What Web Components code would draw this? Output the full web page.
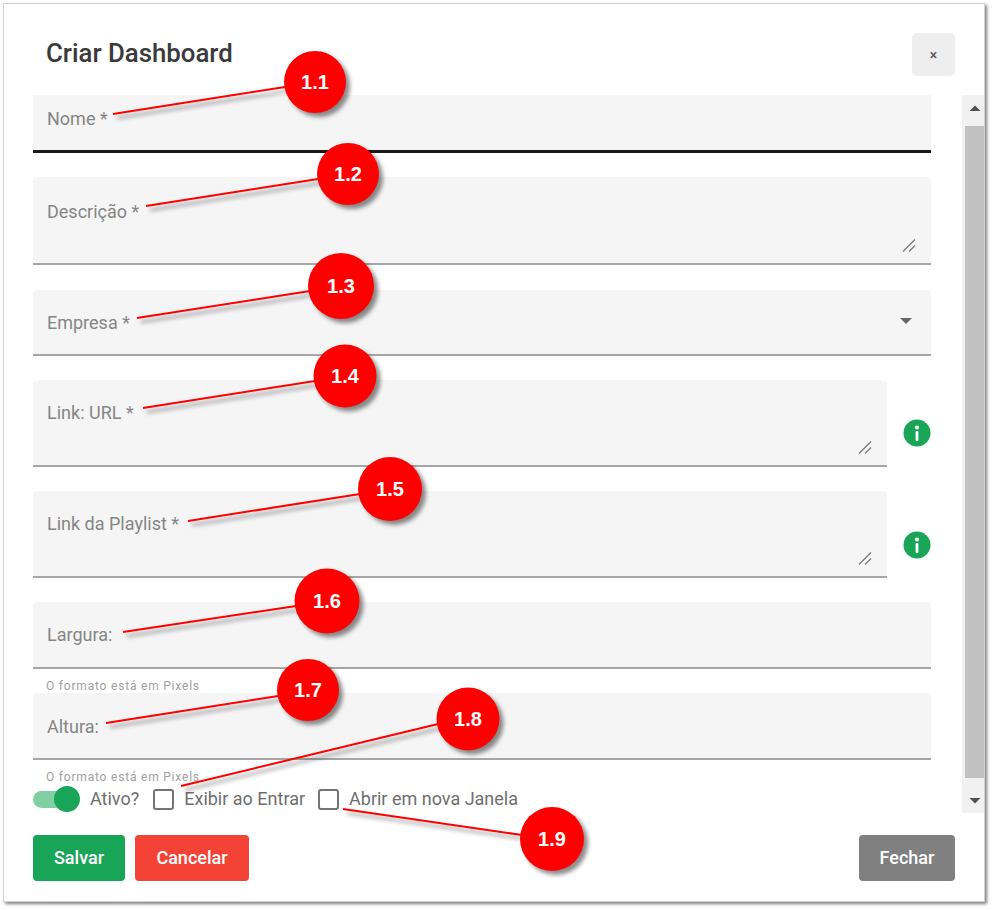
<!DOCTYPE html>
<html lang="pt-BR">
<head>
<meta charset="utf-8">
<title>Criar Dashboard</title>
<style>
  html, body { margin: 0; background: #fff; font-family: Roboto, "Liberation Sans", sans-serif; }
  body { width: 994px; height: 910px; overflow: hidden; position: relative; }
</style>
</head>
<body>
<dash-dialog heading="Criar Dashboard">
  <text-field label="Nome *" focused style="--label-top:25px;--field-h:67px;margin-bottom:24px"></text-field>
  <text-field label="Descrição *" multiline style="--label-top:27px;--field-h:88px;margin-bottom:25px"></text-field>
  <text-field label="Empresa *" select style="--field-h:66px;margin-bottom:24px"></text-field>
  <info-row style="margin-bottom:24px;--shift:19px">
    <text-field label="Link: URL *" multiline style="--field-h:87px"></text-field>
  </info-row>
  <info-row style="margin-bottom:24px;--shift:21px">
    <text-field label="Link da Playlist *" multiline style="--field-h:87px"></text-field>
  </info-row>
  <text-field label="Largura:" hint="O formato está em Pixels" style="--field-h:67px"></text-field>
  <text-field label="Altura:" hint="O formato está em Pixels" style="--label-top:26px;--field-h:67px"></text-field>
  <option-row>
    <toggle-switch style="margin-right:14px">Ativo?</toggle-switch>
    <check-box>Exibir ao Entrar</check-box>
    <check-box>Abrir em nova Janela</check-box>
  </option-row>
  <action-button slot="footer" color="#18a558" style="width:92px">Salvar</action-button>
  <action-button slot="footer" color="#f44336" style="width:114px">Cancelar</action-button>
  <action-button slot="footer" color="#808080" style="width:96px;margin-left:auto">Fechar</action-button>
</dash-dialog>

<note-callout n="1.1" cx="315" cy="82" r="31" x1="113" y1="114" x2="285" y2="87"></note-callout>
<note-callout n="1.2" cx="348" cy="174" r="31" x1="146" y1="206" x2="318" y2="179"></note-callout>
<note-callout n="1.3" cx="341" cy="286" r="33" x1="137" y1="318" x2="310" y2="291"></note-callout>
<note-callout n="1.4" cx="345" cy="376" r="31.5" x1="143" y1="408" x2="315" y2="381"></note-callout>
<note-callout n="1.5" cx="390" cy="489" r="32" x1="188" y1="521" x2="360" y2="494"></note-callout>
<note-callout n="1.6" cx="327" cy="601" r="32.5" x1="123" y1="632" x2="296" y2="606"></note-callout>
<note-callout n="1.7" cx="308" cy="690" r="31" x1="106" y1="723" x2="278" y2="696"></note-callout>
<note-callout n="1.8" cx="468" cy="719" r="31.5" x1="181" y1="786" x2="438" y2="724"></note-callout>
<note-callout n="1.9" cx="552" cy="839" r="32" x1="343" y1="809" x2="522" y2="835"></note-callout>

<script>
class DashDialog extends HTMLElement {
  constructor() {
    super();
    this.attachShadow({ mode: 'open' });
    this.shadowRoot.innerHTML = `
      <style>
        :host {
          display: flex;
          flex-direction: column;
          box-sizing: border-box;
          width: 982px;
          height: 899px;
          margin: 3px 0 0 3px;
          background: #fff;
          border: 1px solid #d2d2d2;
          box-shadow: 2px 2px 3px rgba(0,0,0,.5);
        }
        header {
          display: flex;
          justify-content: space-between;
          height: 62px;
          padding: 29px 29px 0 42px;
        }
        h1 {
          margin: 0;
          font: 500 25.8px/40px Roboto, sans-serif;
          color: #3a3a3a;
        }
        button {
          width: 43px;
          height: 43px;
          padding: 0;
          border: 0;
          border-radius: 5px;
          background: #eee;
          color: #555;
          font: 500 14px Roboto, sans-serif;
        }
        .body {
          display: flex;
          height: 718px;
          padding-left: 29px;
        }
        .scroller {
          width: 898px;
          overflow: hidden;
        }
        .inner {
          display: flex;
          flex-direction: column;
          margin-top: -9px;
        }
        scroll-track { margin-left: 31px; }
        footer {
          display: flex;
          gap: 10px;
          padding: 22px 29px 0;
        }
      </style>
      <header>
        <h1></h1>
        <button type="button">×</button>
      </header>
      <div class="body">
        <div class="scroller"><div class="inner"><slot></slot></div></div>
        <scroll-track></scroll-track>
      </div>
      <footer><slot name="footer"></slot></footer>
    `;
  }

  connectedCallback() {
    this.shadowRoot.querySelector('h1').textContent = this.getAttribute('heading');
  }
}

class ScrollTrack extends HTMLElement {
  constructor() {
    super();
    this.attachShadow({ mode: 'open' });
    this.shadowRoot.innerHTML = `
      <style>
        :host {
          display: flex;
          flex-direction: column;
          width: 22px;
          height: 718px;
          background: #f1f1f1;
        }
        .arrow { height: 31px; display: block; }
        .thumb { flex: 1; margin-left: 3px; background: #c1c1c1; }
        .end { height: 35px; }
      </style>
      <svg class="arrow" viewBox="0 0 22 31"><path d="M7.5 16 L13 10.5 L18.5 16 Z" fill="#505050"/></svg>
      <div class="thumb"></div>
      <svg class="arrow end" viewBox="0 0 22 35"><path d="M7.5 20 L13 25.5 L18.5 20 Z" fill="#505050"/></svg>
    `;
  }
}

class TextField extends HTMLElement {
  constructor() {
    super();
    this.attachShadow({ mode: 'open' });
    this.shadowRoot.innerHTML = `
      <style>
        :host { display: block; flex: 1; min-width: 0; }
        .box {
          position: relative;
          box-sizing: border-box;
          height: var(--field-h, 66px);
          padding: var(--label-top, 25px) 13px 0 14px;
          background: #f5f5f5;
          border-radius: 4px 4px 0 0;
          border-bottom: 2px solid #a6a6a6;
        }
        :host([focused]) .box { border-bottom: 3px solid #1a1a1a; }
        label {
          display: block;
          font: 400 18px/16px Roboto, sans-serif;
          color: #858585;
        }
        svg { position: absolute; display: none; }
        :host([multiline]) .grip { display: block; right: 15px; bottom: 11px; }
        :host([select]) .caret { display: block; right: 19px; top: 28px; }
        .hint {
          display: none;
          box-sizing: border-box;
          height: 24px;
          padding: 10px 13px 0;
          font: 400 12px/14px Roboto, sans-serif;
          letter-spacing: .8px;
          color: #a0a0a0;
        }
        :host([hint]) .hint { display: block; }
      </style>
      <div class="box">
        <label></label>
        <svg class="grip" width="14" height="13" viewBox="0 0 14 13" fill="none" stroke="#777" stroke-width="1.2">
          <path d="M1 12.5 L13 .5 M7 12.5 L13 6.5"/>
        </svg>
        <svg class="caret" width="12" height="6" viewBox="0 0 12 6"><path d="M0 0 H12 L6 6 Z" fill="#666"/></svg>
      </div>
      <div class="hint"></div>
    `;
  }

  connectedCallback() {
    this.shadowRoot.querySelector('label').textContent = this.getAttribute('label');
    this.shadowRoot.querySelector('.hint').textContent = this.getAttribute('hint') || '';
  }
}

class InfoRow extends HTMLElement {
  constructor() {
    super();
    this.attachShadow({ mode: 'open' });
    this.shadowRoot.innerHTML = `
      <style>
        :host { display: flex; align-items: center; }
        svg { width: 28px; height: 28px; margin: var(--shift, 20px) 0 0 16px; flex: none; }
      </style>
      <slot></slot>
      <svg viewBox="0 0 28 28">
        <circle cx="14" cy="14" r="13.5" fill="#18a558"/>
        <circle cx="14" cy="8.5" r="2" fill="#fff"/>
        <rect x="12.6" y="12" width="2.8" height="10" rx="1" fill="#fff"/>
      </svg>
    `;
  }
}

class OptionRow extends HTMLElement {
  constructor() {
    super();
    this.attachShadow({ mode: 'open' });
    this.shadowRoot.innerHTML = `
      <style>
        :host { display: flex; align-items: center; height: 26px; margin-top: 2px; color: #6e6e6e; }
        ::slotted(*) { margin-right: 13px; }
      </style>
      <slot></slot>
    `;
  }
}

class ToggleSwitch extends HTMLElement {
  constructor() {
    super();
    this.attachShadow({ mode: 'open' });
    this.shadowRoot.innerHTML = `
      <style>
        :host { display: inline-flex; align-items: center; font: 400 18px/20px Roboto, sans-serif; }
        .track { position: relative; width: 47px; height: 26px; margin-right: 10px; }
        .track::before {
          content: '';
          position: absolute;
          left: 0; right: 10px; top: 5px;
          height: 17px;
          border-radius: 9px;
          background: #80d0a4;
        }
        .track::after {
          content: '';
          position: absolute;
          right: 0; top: 0;
          width: 26px; height: 26px;
          border-radius: 50%;
          background: #18a558;
        }
      </style>
      <span class="track"></span><slot></slot>
    `;
  }
}

class CheckBox extends HTMLElement {
  constructor() {
    super();
    this.attachShadow({ mode: 'open' });
    this.shadowRoot.innerHTML = `
      <style>
        :host { display: inline-flex; align-items: center; font: 400 18px/20px Roboto, sans-serif; }
        .box {
          box-sizing: border-box;
          width: 21px; height: 21px;
          margin-right: 10px;
          border: 2px solid #757575;
          border-radius: 3px;
          background: #fff;
        }
      </style>
      <span class="box"></span><slot></slot>
    `;
  }
}

class ActionButton extends HTMLElement {
  constructor() {
    super();
    this.attachShadow({ mode: 'open' });
    this.shadowRoot.innerHTML = `
      <style>
        :host { display: block; height: 46px; }
        button {
          width: 100%;
          height: 100%;
          padding: 0 0 2px;
          border: 0;
          border-radius: 4px;
          color: #fff;
          font: 500 18px Roboto, sans-serif;
        }
      </style>
      <button type="button"><slot></slot></button>
    `;
  }

  connectedCallback() {
    this.shadowRoot.querySelector('button').style.background = this.getAttribute('color');
  }
}

class NoteCallout extends HTMLElement {
  constructor() {
    super();
    this.attachShadow({ mode: 'open' });
  }

  connectedCallback() {
    const a = name => this.getAttribute(name);
    this.shadowRoot.innerHTML = `
      <style>
        :host { position: absolute; left: 0; top: 0; width: 994px; height: 910px; pointer-events: none; }
        svg { display: block; }
        g { filter: drop-shadow(4px 4px 2px rgba(0,0,0,.45)); }
        text { font: 700 20px "Liberation Sans", Arial, sans-serif; fill: #fff; text-anchor: middle; }
      </style>
      <svg width="994" height="910" viewBox="0 0 994 910">
        <g>
          <line x1="${a('x1')}" y1="${a('y1')}" x2="${a('x2')}" y2="${a('y2')}" stroke="#f00" stroke-width="2"/>
          <circle cx="${a('cx')}" cy="${a('cy')}" r="${a('r')}" fill="#f00"/>
        </g>
        <text x="${a('cx')}" y="${+a('cy') + 7}">${a('n')}</text>
      </svg>
    `;
  }
}

customElements.define('scroll-track', ScrollTrack);
customElements.define('dash-dialog', DashDialog);
customElements.define('text-field', TextField);
customElements.define('info-row', InfoRow);
customElements.define('option-row', OptionRow);
customElements.define('toggle-switch', ToggleSwitch);
customElements.define('check-box', CheckBox);
customElements.define('action-button', ActionButton);
customElements.define('note-callout', NoteCallout);
</script>
</body>
</html>
